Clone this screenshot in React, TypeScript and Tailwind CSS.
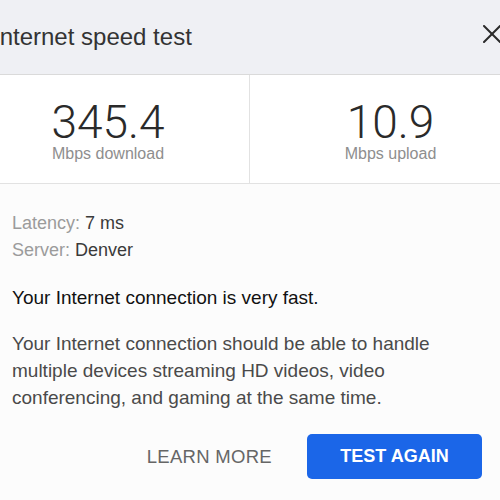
import React from 'react';

const CloseIcon = () => (
  <svg width="18" height="18" viewBox="0 0 18 18" fill="none" stroke="currentColor" strokeWidth="2" strokeLinecap="round">
    <path d="M1 1 L17 17" />
    <path d="M17 1 L1 17" />
  </svg>
);

const Stat = ({ value, label, divider }: { value: string; label: string; divider?: boolean }) => (
  <div className={`flex flex-col items-center pt-[25px] pb-[19px] ${divider ? 'border-l border-[#e2e2e2]' : ''}`}>
    <div className="text-[46px] leading-[44px] font-light text-[#2a2a2a] font-['Roboto','Liberation_Sans',sans-serif]">
      {value}
    </div>
    <div className="text-[16px] leading-[20px] text-[#8e8e8e]">{label}</div>
  </div>
);

export default function App() {
  return (
    <div className="w-[500px] h-[500px] overflow-hidden bg-[#fcfcfc] font-['Liberation_Sans','Helvetica',sans-serif]">
      <div className="w-[564px] -ml-[33px]">
        <header className="h-[75px] flex items-center justify-between pl-[26px] pr-[30px] bg-[#eff0f4] border-b border-[#dadada]">
          <h1 className="text-[24px] leading-[30px] text-[#333]">Internet speed test</h1>
          <button className="text-[#2b2b2b] -mt-[6px]">
            <CloseIcon />
          </button>
        </header>

        <div className="grid grid-cols-2 border-b border-[#e2e2e2] bg-white">
          <Stat value="345.4" label="Mbps download" />
          <Stat value="10.9" label="Mbps upload" divider />
        </div>

        <div className="pl-[45px] pr-[49px] pt-[26px]">
          <div className="text-[18px] leading-[27px]">
            <div>
              <span className="text-[#9b9b9b]">Latency: </span>
              <span className="text-[#3a3a3a]">7 ms</span>
            </div>
            <div>
              <span className="text-[#9b9b9b]">Server: </span>
              <span className="text-[#3a3a3a]">Denver</span>
            </div>
          </div>

          <p className="mt-[20px] text-[19px] leading-[27px] font-medium text-[#111]">
            Your Internet connection is very fast.
          </p>

          <p className="mt-[19px] w-[450px] text-[19px] leading-[27px] text-[#4a4a4a]">
            Your Internet connection should be able to handle multiple devices streaming HD videos, video
            conferencing, and gaming at the same time.
          </p>

          <div className="mt-[23px] flex items-center justify-end gap-[35px]">
            <button className="text-[18.5px] font-medium text-[#666] tracking-[0.3px]">LEARN MORE</button>
            <button className="w-[175px] h-[45px] rounded-[5px] bg-[#1b66e8] text-white text-[18px] font-bold">
              TEST AGAIN
            </button>
          </div>
        </div>
      </div>
    </div>
  );
}
